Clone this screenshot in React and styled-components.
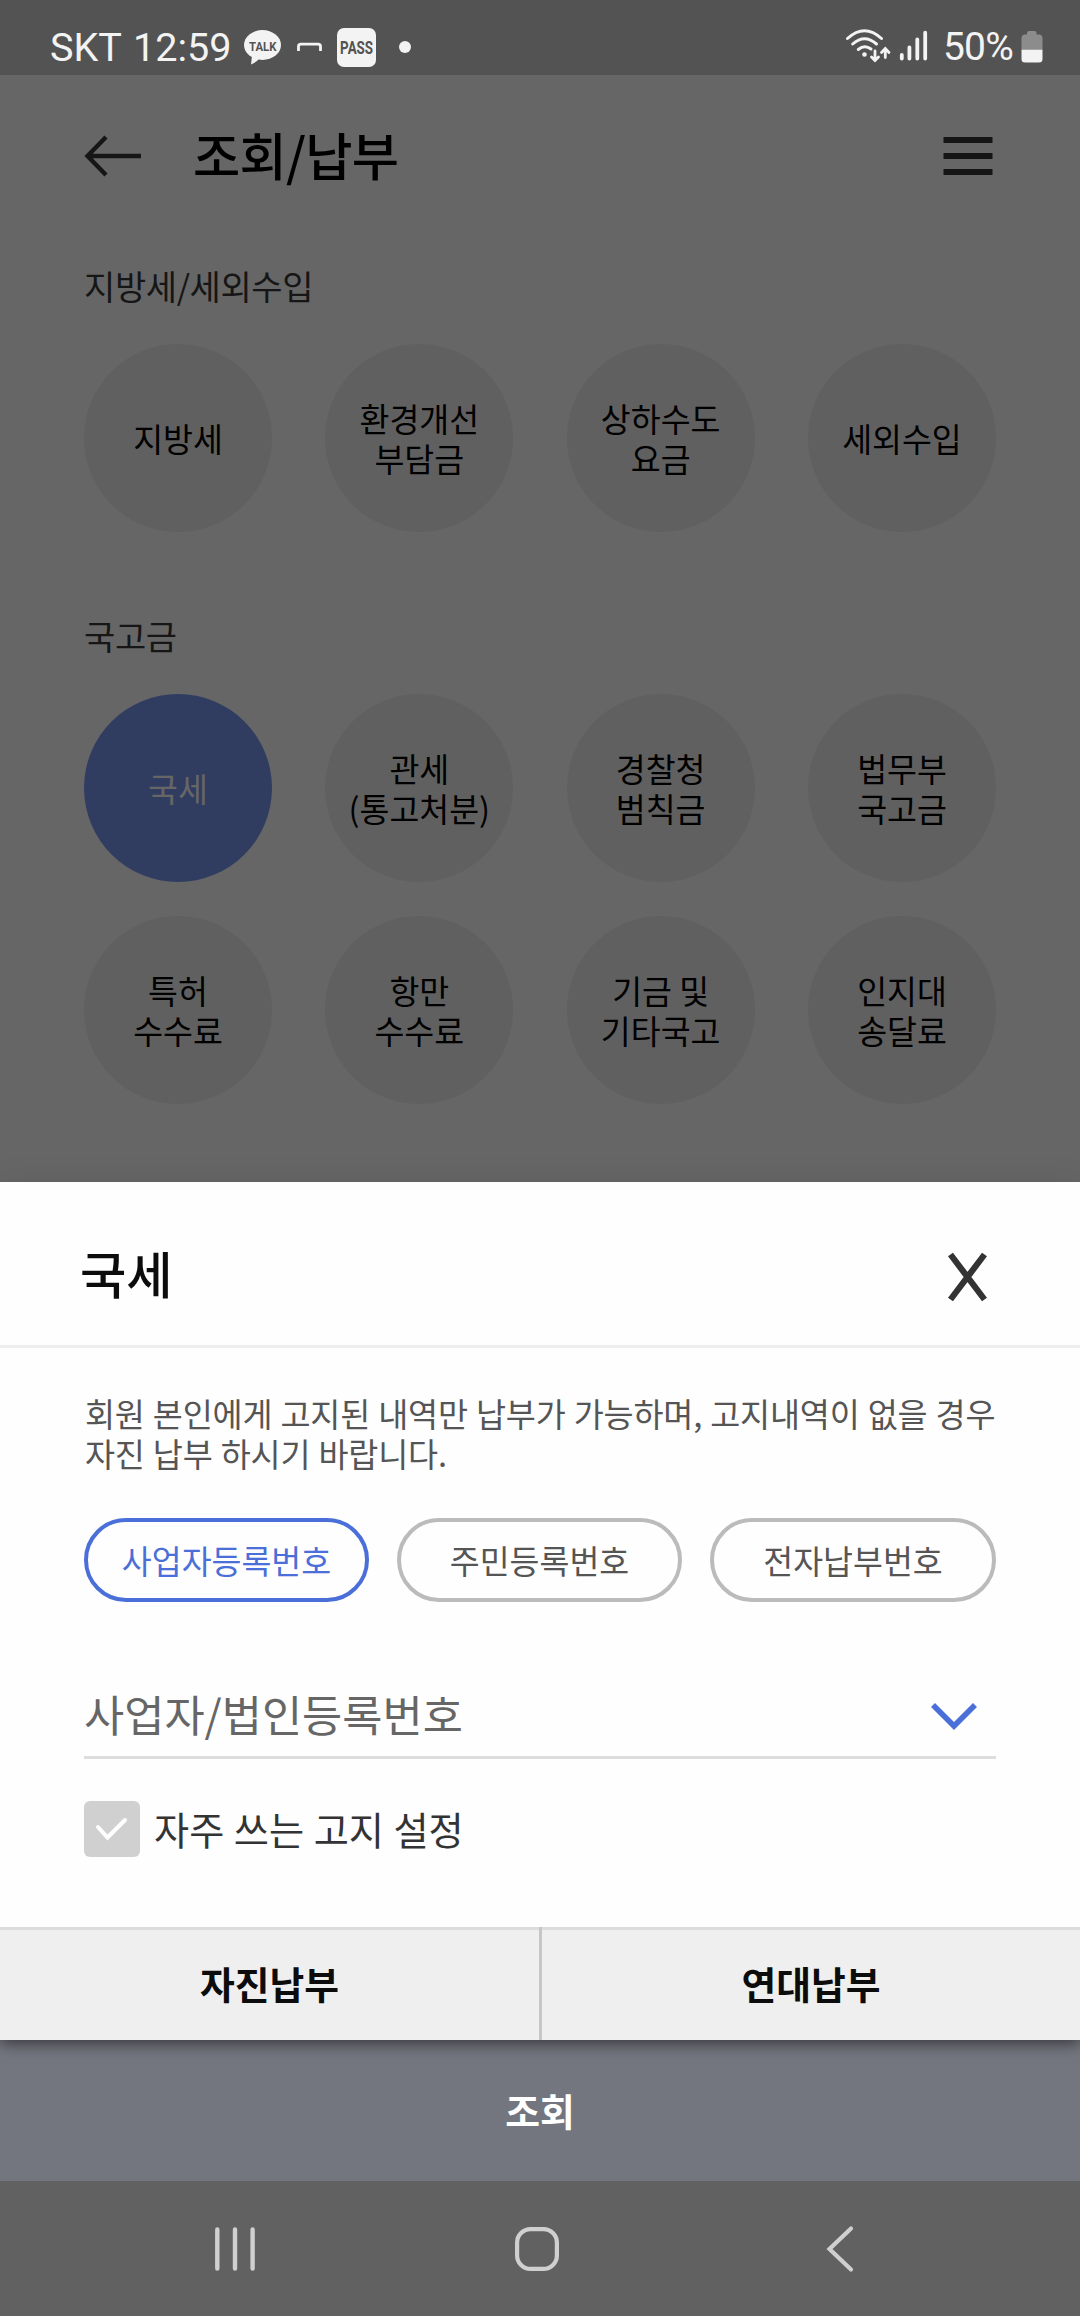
import React from 'react';
import styled, { createGlobalStyle } from 'styled-components';

const GlobalStyle = createGlobalStyle`
  * {
    box-sizing: border-box;
  }

  body {
    margin: 0;
    background-color: #666;
    font-family: 'Noto Sans CJK KR', 'Noto Sans', sans-serif;
  }

  button {
    margin: 0;
    padding: 0;
    border: 0;
    background: none;
    font-family: inherit;
  }

  svg {
    display: block;
    flex-shrink: 0;
  }
`;

const Screen = styled.div`
  display: flex;
  flex-direction: column;
  width: 1080px;
  height: 2316px;
  overflow: hidden;
  background-color: #666;
`;

const StatusBar = styled.div`
  display: flex;
  flex-shrink: 0;
  justify-content: space-between;
  height: 75px;
  padding: 22px 37px 0 50px;
  background-color: #535353;
  color: #f3f3f3;
  font-family: Roboto, sans-serif;
  font-size: 39px;
`;

const StatusGroup = styled.div`
  display: flex;
  align-items: center;
  height: 50px;
`;

const Carrier = styled.span`
  width: 194px;
  font-size: 39.6px;
  word-spacing: 2px;
  white-space: nowrap;
`;

const Battery = styled.span`
  width: 78px;
  margin-left: 14px;
  letter-spacing: -0.8px;
  white-space: nowrap;
`;

const TopBar = styled.header`
  display: flex;
  flex-shrink: 0;
  align-items: center;
  height: 162px;
  padding: 0 87px 0 84px;
`;

const PageTitle = styled.h1`
  flex: 1;
  margin: 0 0 0 51px;
  padding-bottom: 5px;
  color: #000;
  font-size: 51.3px;
  font-weight: 500;
  line-height: 60px;
  letter-spacing: -0.7px;
`;

const Section = styled.section`
  flex-shrink: 0;
  padding: 0 84px;
  margin-bottom: ${({ $last }) => ($last ? '0' : '55px')};
`;

const SectionTitle = styled.h2`
  margin: 0;
  padding: 24px 0 33px;
  color: #161616;
  font-size: 34px;
  font-weight: 400;
  line-height: 50px;
  letter-spacing: -0.4px;
`;

const CircleGrid = styled.div`
  display: grid;
  grid-template-columns: repeat(4, 188px);
  justify-content: space-between;
  row-gap: 34px;
`;

const Circle = styled.button`
  height: 188px;
  border-radius: 50%;
  background-color: ${({ $active }) => ($active ? '#303d61' : '#606060')};
  color: ${({ $active }) => ($active ? '#666' : '#000')};
  font-size: 32.5px;
  line-height: 40px;
  white-space: pre-line;
`;

const Sheet = styled.div`
  flex: 1;
  display: flex;
  flex-direction: column;
  margin-top: 78px;
  background-color: #fefefe;
  box-shadow: 0 0 30px rgba(0, 0, 0, 0.08);
`;

const SheetHeader = styled.div`
  display: flex;
  justify-content: space-between;
  align-items: center;
  height: 166px;
  padding: 26px 92px 0 80px;
  border-bottom: 3px solid #ededed;
`;

const SheetTitle = styled.h2`
  margin: 0;
  padding-bottom: 7px;
  color: #0c0c0c;
  font-size: 50.4px;
  font-weight: 500;
  line-height: 60px;
`;

const SheetBody = styled.div`
  height: 579px;
  padding: 45px 84px 0;
`;

const Notice = styled.p`
  margin: 0;
  padding-left: 1px;
  color: #555;
  font-size: 32.7px;
  line-height: 40px;
  letter-spacing: -0.2px;
  word-spacing: 1px;
  white-space: nowrap;
`;

const Tabs = styled.div`
  display: grid;
  grid-template-columns: 285px 285px 286px;
  gap: 28px;
  margin-top: 45px;
`;

const Tab = styled.button`
  height: 84px;
  border: 4px solid ${({ $active }) => ($active ? '#4a6fd8' : '#bbb')};
  border-radius: 42px;
  color: ${({ $active }) => ($active ? '#4a6fd8' : '#555')};
  font-size: 32.5px;
  line-height: 48px;
`;

const Field = styled.div`
  display: flex;
  justify-content: space-between;
  align-items: center;
  height: 91px;
  margin-top: 66px;
  padding: 2px 18px 0 0;
  border-bottom: 3px solid #ddd;
  color: #666;
  font-size: 43.7px;
  line-height: 60px;
`;

const CheckRow = styled.label`
  display: flex;
  align-items: center;
  gap: 14px;
  margin-top: 42px;
  color: #333;
  font-size: 38.2px;
  line-height: 56px;
  word-spacing: 1px;
`;

const CheckBox = styled.span`
  display: flex;
  justify-content: center;
  align-items: center;
  width: 56px;
  height: 56px;
  border-radius: 6px;
  background-color: #d0d0d0;
`;

const ActionRow = styled.div`
  display: grid;
  grid-template-columns: 539px 538px;
  column-gap: 3px;
  height: 113px;
  background-color: #c6c6c6;
  position: relative;
  box-shadow: 0 4px 14px rgba(0, 0, 0, 0.5);
  clip-path: inset(0 0 -30px 0);
`;

const ActionButton = styled.button`
  padding-bottom: 4px;
  border-top: 3px solid #dcdcdc;
  background-color: #efefef;
  color: #0c0c0c;
  font-size: 37.8px;
  font-weight: 700;
  line-height: 56px;
`;

const SearchButton = styled.button`
  height: 141px;
  padding-bottom: 1px;
  background-color: #73767e;
  color: #fff;
  font-size: 37.8px;
  font-weight: 700;
  line-height: 56px;
`;

const NavBar = styled.nav`
  display: flex;
  align-items: flex-start;
  height: 135px;
  padding: 43px 0 0 211px;
  gap: 256px;
  background-color: #616161;
`;

const LOCAL_TAXES = ['지방세', '환경개선\n부담금', '상하수도\n요금', '세외수입'];

const TREASURY = [
  '국세',
  '관세\n(통고처분)',
  '경찰청\n범칙금',
  '법무부\n국고금',
  '특허\n수수료',
  '항만\n수수료',
  '기금 및\n기타국고',
  '인지대\n송달료',
];

const NUMBER_TYPES = ['사업자등록번호', '주민등록번호', '전자납부번호'];

const NoticeIcons = () => (
  <svg width="168" height="46" viewBox="244 24 168 46">
    <g fill="#f3f3f3">
      <ellipse cx="262.5" cy="45" rx="18.5" ry="15" />
      <path d="M252 56 L251 64.5 Q256 62.5 260 58 Z" />
      <rect x="337" y="28" width="39" height="39" rx="7" />
      <circle cx="405" cy="47" r="6" />
    </g>
    <path d="M298.5 51 V46.5 Q298.5 44.2 301 44.2 H318 Q320.5 44.2 320.5 46.5 V51" fill="none" stroke="#f3f3f3" strokeWidth="2.8" />
    <text x="262.7" y="50.5" fill="#535353" fontFamily="Roboto" fontSize="13.4" fontWeight="700" textAnchor="middle" textLength="27.5" lengthAdjust="spacingAndGlyphs">TALK</text>
    <text x="356.6" y="54.3" fill="#535353" fontFamily="Roboto" fontSize="19" fontWeight="700" textAnchor="middle" textLength="33" lengthAdjust="spacingAndGlyphs">PASS</text>
  </svg>
);

const SignalIcons = () => (
  <svg width="83" height="40" viewBox="847 28 83 40" fill="none" stroke="#f3f3f3" strokeLinecap="round">
    <g strokeWidth="3">
      <path d="M848.5 39.5 Q865.5 24 882.5 39.5" />
      <path d="M853.7 45 Q865.5 34.5 877.5 45" />
      <path d="M859.3 50.5 Q865.5 45.3 872 50" />
    </g>
    <circle cx="865.5" cy="55.5" r="2.3" fill="#f3f3f3" stroke="none" />
    <path d="M876 52 V61 M872.5 58 L876 61.5 L879.5 58" strokeWidth="2.8" />
    <path d="M886.3 58.5 V50.5 M882.5 53.5 L886.3 49.5 L890 53.5" strokeWidth="2.8" />
    <path d="M902.8 56 V59.5 M910.4 48.3 V59.5 M918.3 40.3 V59.5 M926.2 33.7 V59.5" strokeWidth="3.8" />
  </svg>
);

const BatteryIcon = () => (
  <svg width="22" height="34" viewBox="0 0 22 34">
    <path d="M6 4.5 V3 Q6 1 8 1 H13.5 Q15.5 1 15.5 3 V4.5 H18 Q21.5 4.5 21.5 8.5 V20 H0.5 V8.5 Q0.5 4.5 4 4.5 Z" fill="#8c8c8c" />
    <path d="M0.5 19.7 H21.5 V29 Q21.5 32.5 18 32.5 H4 Q0.5 32.5 0.5 29 Z" fill="#f3f3f3" />
  </svg>
);

const BackArrow = () => (
  <svg width="58" height="42" viewBox="0 0 58 42" fill="none" stroke="#161616" strokeWidth="4.4">
    <path d="M57 21 H4 M22 2 L3.5 21 L22 40" />
  </svg>
);

const MenuIcon = () => (
  <svg width="50" height="40" viewBox="0 0 50 40" fill="#161616">
    <rect x="0.5" y="1" width="49" height="6" />
    <rect x="0.5" y="17" width="49" height="6" />
    <rect x="0.5" y="33" width="49" height="6" />
  </svg>
);

const CloseIcon = () => (
  <svg width="41" height="52" viewBox="0 0 41 52" fill="none" stroke="#333" strokeWidth="6.2">
    <path d="M3.5 3.5 L37.5 48.5 M37.5 3.5 L3.5 48.5" />
  </svg>
);

const ChevronIcon = () => (
  <svg width="48" height="36" viewBox="0 -6 48 36" fill="none" stroke="#4a6fd8" strokeWidth="5.6">
    <path d="M3 4 L24 25 L45 4" />
  </svg>
);

const CheckIcon = () => (
  <svg width="34" height="26" viewBox="0 0 34 26" fill="none" stroke="#fff" strokeWidth="4" strokeLinecap="round">
    <path d="M3 11 L12.5 21.5 L30 4" />
  </svg>
);

export default function App() {
  return (
    <>
      <GlobalStyle />
      <Screen>
        <StatusBar>
          <StatusGroup>
            <Carrier>SKT 12:59</Carrier>
            <NoticeIcons />
          </StatusGroup>
          <StatusGroup>
            <SignalIcons />
            <Battery>50%</Battery>
            <BatteryIcon />
          </StatusGroup>
        </StatusBar>

        <TopBar>
          <BackArrow />
          <PageTitle>조회/납부</PageTitle>
          <MenuIcon />
        </TopBar>

        <Section>
          <SectionTitle>지방세/세외수입</SectionTitle>
          <CircleGrid>
            {LOCAL_TAXES.map((name) => (
              <Circle key={name}>{name}</Circle>
            ))}
          </CircleGrid>
        </Section>

        <Section $last>
          <SectionTitle>국고금</SectionTitle>
          <CircleGrid>
            {TREASURY.map((name) => (
              <Circle key={name} $active={name === '국세'}>
                {name}
              </Circle>
            ))}
          </CircleGrid>
        </Section>

        <Sheet>
          <SheetHeader>
            <SheetTitle>국세</SheetTitle>
            <CloseIcon />
          </SheetHeader>
          <SheetBody>
            <Notice>
              회원 본인에게 고지된 내역만 납부가 가능하며, 고지내역이 없을 경우
              <br />
              자진 납부 하시기 바랍니다.
            </Notice>
            <Tabs>
              {NUMBER_TYPES.map((name, i) => (
                <Tab key={name} $active={i === 0}>
                  {name}
                </Tab>
              ))}
            </Tabs>
            <Field>
              사업자/법인등록번호
              <ChevronIcon />
            </Field>
            <CheckRow>
              <CheckBox>
                <CheckIcon />
              </CheckBox>
              자주 쓰는 고지 설정
            </CheckRow>
          </SheetBody>
          <ActionRow>
            <ActionButton>자진납부</ActionButton>
            <ActionButton>연대납부</ActionButton>
          </ActionRow>
          <SearchButton>조회</SearchButton>
          <NavBar>
            <svg width="48" height="50" viewBox="211 2224 48 50" stroke="#d0d0d0" strokeWidth="4.4" strokeLinecap="round">
              <path d="M217.3 2229.5 V2268.5 M235 2229.5 V2268.5 M252.6 2229.5 V2268.5" />
            </svg>
            <svg width="44" height="50" viewBox="515 2224 44 50" fill="none" stroke="#d0d0d0" strokeWidth="4.2">
              <rect x="517.1" y="2229.1" width="39.8" height="39.8" rx="13.5" />
            </svg>
            <svg width="48" height="50" viewBox="815 2224 48 50" fill="none" stroke="#d0d0d0" strokeWidth="4.2" strokeLinecap="round">
              <path d="M851 2228.5 L829.5 2249 L851 2269.5" />
            </svg>
          </NavBar>
        </Sheet>
      </Screen>
    </>
  );
}
